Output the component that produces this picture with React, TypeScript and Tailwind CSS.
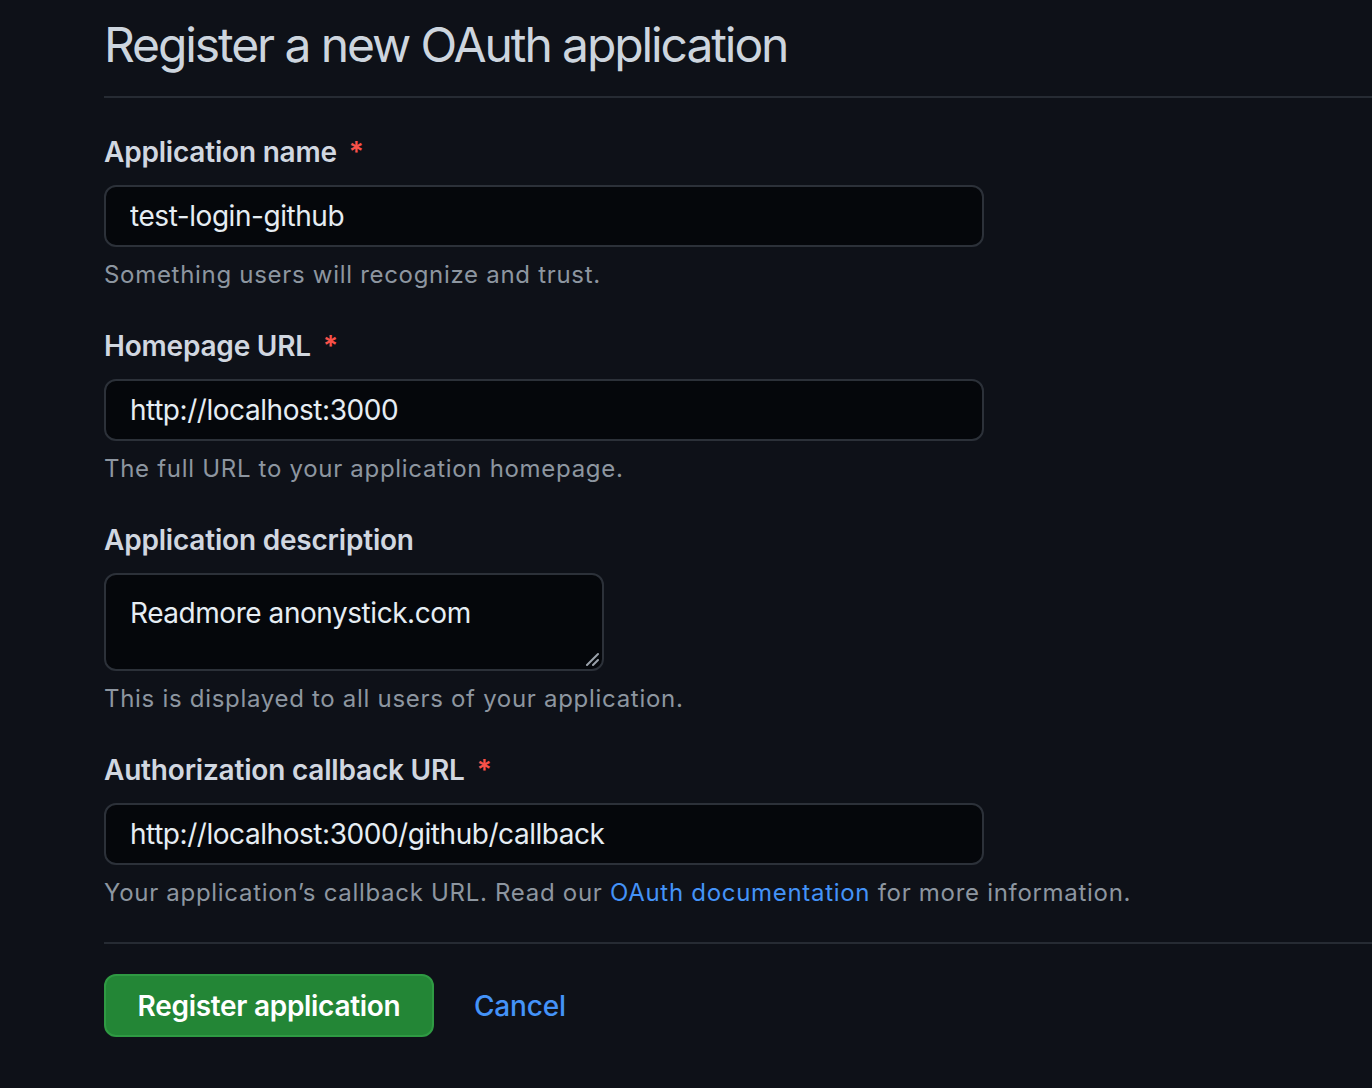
import React from "react";

const font = { fontFamily: "Inter, 'Noto Sans', 'Liberation Sans', sans-serif" };

function Label({ text, required }: { text: string; required?: boolean }) {
  return (
    <div className="flex items-center h-[40px] text-[28px] font-semibold text-[#d1d7e0] tracking-[-0.2px]">
      <span>{text}</span>
      {required && <span className="ml-[12px] text-[#f85149]">*</span>}
    </div>
  );
}

function Helper({ children }: { children: React.ReactNode }) {
  return (
    <p className="mt-[10px] h-[36px] leading-[36px] text-[24px] text-[#8d96a0] tracking-[0.7px]">
      {children}
    </p>
  );
}

function TextField({ value }: { value: string }) {
  return (
    <input
      readOnly
      value={value}
      className="mt-[13px] block w-[880px] h-[62px] px-[24px] rounded-[12px] border-2 border-[#2c3139] bg-[#05070b] text-[28px] text-[#e6edf3] outline-none tracking-[-0.45px]"
      style={font}
    />
  );
}

export default function App() {
  return (
    <div className="min-h-[1088px] bg-[#0e1118] pl-[104px] overflow-hidden" style={font}>
      <div className="pt-[15px] pb-[21px] border-b-2 border-[#262b33]">
        <h1 className="text-[48px] leading-[60px] font-normal text-[#cdd5de] tracking-[-2.1px]">
          Register a new OAuth application
        </h1>
      </div>

      <div className="pt-[34px]">
        <Label text="Application name" required />
        <TextField value="test-login-github" />
        <Helper>Something users will recognize and trust.</Helper>

        <div className="mt-[33px]">
          <Label text="Homepage URL" required />
          <TextField value="http://localhost:3000" />
          <Helper>The full URL to your application homepage.</Helper>
        </div>

        <div className="mt-[33px]">
          <Label text="Application description" />
          <div className="relative mt-[13px] w-[500px] h-[98px] rounded-[12px] border-2 border-[#2c3139] bg-[#05070b] px-[24px] pt-[17px] text-[28px] text-[#e6edf3] tracking-[-0.45px]">
            Readmore anonystick.com
            <svg className="absolute right-[3px] bottom-[3px]" width="14" height="14" viewBox="0 0 14 14">
              <path d="M2 13 L13 2 M8 13 L13 8" stroke="#9aa1aa" strokeWidth="2" strokeLinecap="round" />
            </svg>
          </div>
          <Helper>This is displayed to all users of your application.</Helper>
        </div>

        <div className="mt-[33px]">
          <Label text="Authorization callback URL" required />
          <TextField value="http://localhost:3000/github/callback" />
          <Helper>
            Your application’s callback URL. Read our{" "}
            <a className="text-[#4493f8]">OAuth documentation</a> for more information.
          </Helper>
        </div>
      </div>

      <div className="mt-[31px] border-t-2 border-[#262b33]" />

      <div className="mt-[30px] flex items-center gap-[40px]">
        <button
          className="w-[330px] h-[63px] rounded-[12px] bg-[#238636] border-2 border-[#2f9a43] text-white text-[28px] font-semibold tracking-[-0.3px]"
          style={font}
        >
          Register application
        </button>
        <a className="text-[28px] font-medium text-[#4493f8] tracking-[-0.2px]">Cancel</a>
      </div>
    </div>
  );
}
